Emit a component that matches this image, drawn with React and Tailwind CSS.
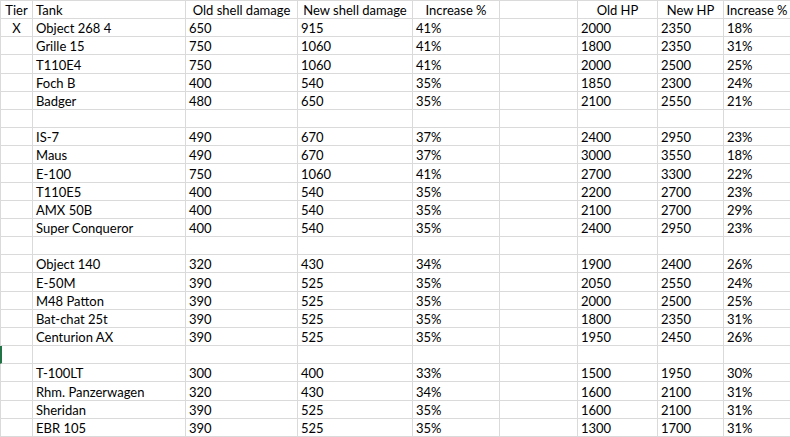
import React from "react";

const groups = [
  [
    ["Object 268 4", 650, 915, "41%", 2000, 2350, "18%"],
    ["Grille 15", 750, 1060, "41%", 1800, 2350, "31%"],
    ["T110E4", 750, 1060, "41%", 2000, 2500, "25%"],
    ["Foch B", 400, 540, "35%", 1850, 2300, "24%"],
    ["Badger", 480, 650, "35%", 2100, 2550, "21%"],
  ],
  [
    ["IS-7", 490, 670, "37%", 2400, 2950, "23%"],
    ["Maus", 490, 670, "37%", 3000, 3550, "18%"],
    ["E-100", 750, 1060, "41%", 2700, 3300, "22%"],
    ["T110E5", 400, 540, "35%", 2200, 2700, "23%"],
    ["AMX 50B", 400, 540, "35%", 2100, 2700, "29%"],
    ["Super Conqueror", 400, 540, "35%", 2400, 2950, "23%"],
  ],
  [
    ["Object 140", 320, 430, "34%", 1900, 2400, "26%"],
    ["E-50M", 390, 525, "35%", 2050, 2550, "24%"],
    ["M48 Patton", 390, 525, "35%", 2000, 2500, "25%"],
    ["Bat-chat 25t", 390, 525, "35%", 1800, 2350, "31%"],
    ["Centurion AX", 390, 525, "35%", 1950, 2450, "26%"],
  ],
  [
    ["T-100LT", 300, 400, "33%", 1500, 1950, "30%"],
    ["Rhm. Panzerwagen", 320, 430, "34%", 1600, 2100, "31%"],
    ["Sheridan", 390, 525, "35%", 1600, 2100, "31%"],
    ["EBR 105", 390, 525, "35%", 1300, 1700, "31%"],
  ],
];

const Cell = ({ children, align = "left", className = "" }) => (
  <div
    className={`flex items-end overflow-hidden whitespace-nowrap border-r border-b border-[#dadada] px-[3px] pb-[1px] leading-none ${
      align === "center" ? "justify-center" : "justify-start"
    } ${className}`}
  >
    {children}
  </div>
);

const App = () => {
  const rows = [];
  groups.forEach((group, gi) => {
    if (gi > 0) rows.push({ blank: true, last: gi === 3 });
    group.forEach((r, ri) => rows.push({ data: r, tier: gi === 0 && ri === 0 ? "X" : "" }));
  });

  return (
    <div className="h-[437px] w-[790px] overflow-hidden bg-white text-[13px] text-black [font-family:Lato,'Liberation_Sans',sans-serif]">
      <div className="grid h-[437px] grid-cols-[32px_153px_112px_115px_87px_78px_80px_66px_67px] grid-rows-[repeat(24,minmax(0,1fr))] border-t border-l border-[#dadada]">
        <Cell align="center">Tier</Cell>
        <Cell>Tank</Cell>
        <Cell align="center">Old shell damage</Cell>
        <Cell align="center">New shell damage</Cell>
        <Cell align="center">Increase %</Cell>
        <Cell />
        <Cell align="center">Old HP</Cell>
        <Cell align="center">New HP</Cell>
        <Cell align="center">Increase %</Cell>

        {rows.map((row, i) =>
          row.blank ? (
            <React.Fragment key={i}>
              <Cell className={row.last ? "-ml-px border-l-2 border-l-[#217346]" : ""} />
              <Cell />
              <Cell />
              <Cell />
              <Cell />
              <Cell />
              <Cell />
              <Cell />
              <Cell />
            </React.Fragment>
          ) : (
            <React.Fragment key={i}>
              <Cell align="center">{row.tier}</Cell>
              <Cell>{row.data[0]}</Cell>
              <Cell>{row.data[1]}</Cell>
              <Cell>{row.data[2]}</Cell>
              <Cell>{row.data[3]}</Cell>
              <Cell />
              <Cell>{row.data[4]}</Cell>
              <Cell>{row.data[5]}</Cell>
              <Cell>{row.data[6]}</Cell>
            </React.Fragment>
          )
        )}
      </div>
    </div>
  );
};

export default App;
